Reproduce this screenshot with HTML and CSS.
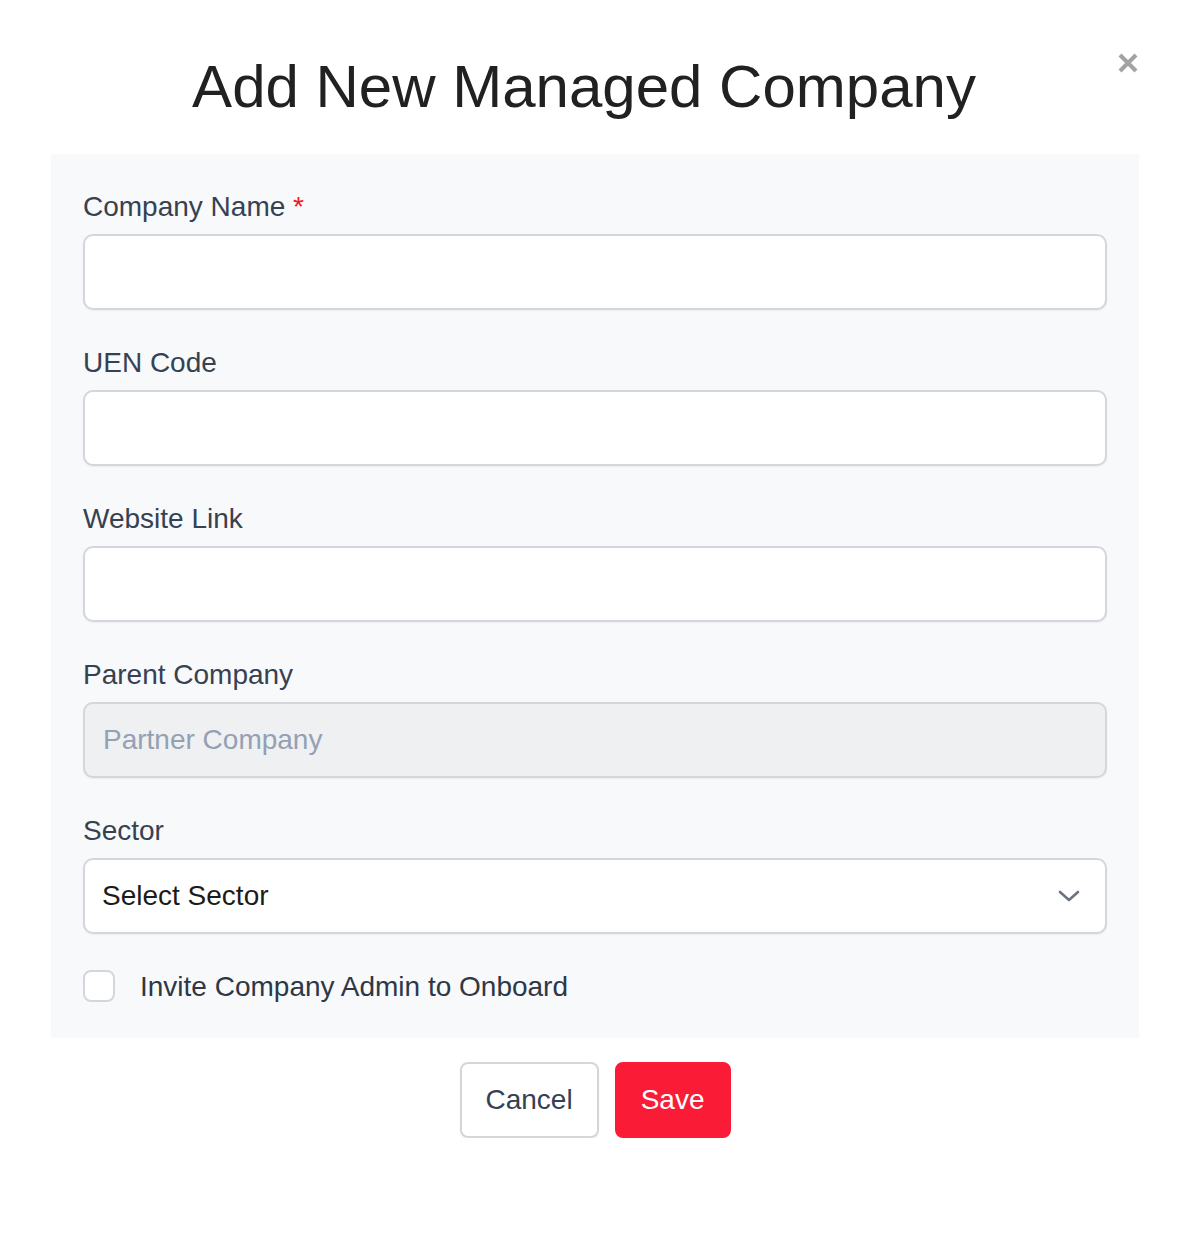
FILE: index.html
```html
<!DOCTYPE html>
<html>
<head>
<meta charset="utf-8">
<link rel="stylesheet" href="styles.css">
</head>
<body>
<div class="modal">
  <div class="header">
    <h1 class="title">Add New Managed Company</h1>
    <button class="close" aria-label="Close">
      <svg width="22" height="22" viewBox="0 0 22 22"><path d="M3 3 L19 19 M19 3 L3 19" stroke="#a3a3a3" stroke-width="4.2" stroke-linecap="butt"/></svg>
    </button>
  </div>
  <div class="panel">
    <div class="field">
      <label class="label">Company Name <span class="req">*</span></label>
      <input class="input" type="text">
    </div>
    <div class="field">
      <label class="label">UEN Code</label>
      <input class="input" type="text">
    </div>
    <div class="field">
      <label class="label">Website Link</label>
      <input class="input" type="text">
    </div>
    <div class="field">
      <label class="label">Parent Company</label>
      <input class="input disabled" type="text" placeholder="Partner Company" disabled>
    </div>
    <div class="field">
      <label class="label">Sector</label>
      <div class="select">
        <span>Select Sector</span>
        <svg width="24" height="16" viewBox="0 0 24 16"><path d="M3 4 L12 12 L21 4" fill="none" stroke="#6b7280" stroke-width="2.6" stroke-linecap="round" stroke-linejoin="round"/></svg>
      </div>
    </div>
    <div class="check-row">
      <span class="checkbox"></span>
      <span class="check-label">Invite Company Admin to Onboard</span>
    </div>
  </div>
  <div class="actions">
    <button class="btn cancel">Cancel</button>
    <button class="btn save">Save</button>
  </div>
</div>
</body>
</html>
```
FILE: styles.css
```css
* { box-sizing: border-box; }
html, body { margin: 0; padding: 0; background: #ffffff; }
body { font-family: "Liberation Sans", Arial, Helvetica, sans-serif; }
.modal {
  width: 1088px;
  margin-left: 51px;
  padding-top: 51px;
}
.header {
  display: flex;
  align-items: flex-start;
  margin-bottom: 31px;
}
.title {
  flex: 1;
  margin: 0;
  text-align: center;
  font-size: 60px;
  line-height: 72px;
  font-weight: 400;
  color: #212121;
}
.close {
  width: 22px;
  height: 22px;
  padding: 0;
  margin-top: 1px;
  border: none;
  background: none;
  display: flex;
}
.panel {
  background: #f8f9fb;
  padding: 32px;
}
.field { margin-bottom: 32px; }
.label {
  display: block;
  font-size: 28px;
  line-height: 40px;
  padding-top: 1px;
  color: #364152;
  margin-bottom: 7px;
}
.req { color: #f21a1a; }
.input, .select {
  display: block;
  width: 100%;
  height: 76px;
  border: 2px solid #d4d6db;
  border-radius: 10px;
  background: #ffffff;
  box-shadow: 0 1px 2px rgba(0,0,0,0.05);
  font-family: inherit;
  font-size: 28px;
  padding: 0 18px;
  outline: none;
}
.input.disabled { background: #eff0f2; }
.input::placeholder { color: #94a0b4; }
.select {
  display: flex;
  align-items: center;
  justify-content: space-between;
  color: #1b1b1b;
  padding: 0 24px 0 17px;
}
.check-row {
  display: flex;
  align-items: center;
  height: 40px;
}
.checkbox {
  width: 32px;
  height: 32px;
  border: 2px solid #d4d6db;
  border-radius: 8px;
  background: #fff;
  margin-right: 25px;
}
.check-label {
  font-size: 28px;
  color: #2e3746;
  padding-top: 1px;
}
.actions {
  display: flex;
  justify-content: center;
  gap: 16px;
  margin-top: 24px;
}
.btn {
  height: 76px;
  font-family: inherit;
  font-size: 28px;
  padding: 0 24px;
  border-radius: 8px;
  cursor: pointer;
}
.cancel {
  background: #fff;
  border: 2px solid #d4d6db;
  color: #354152;
  box-shadow: 0 1px 2px rgba(0,0,0,0.05);
}
.save {
  background: #fa1c37;
  border: 2px solid #fa1c37;
  color: #fff;
}
```
